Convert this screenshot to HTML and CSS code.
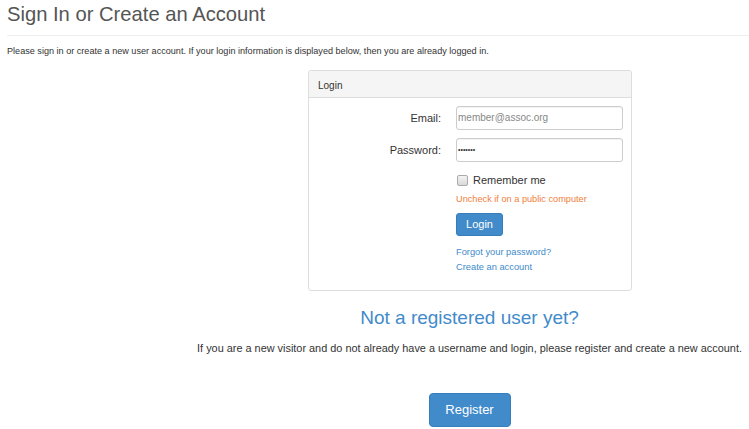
FILE: index.html
```html
<!DOCTYPE html>
<html>
<head>
<meta charset="utf-8">
<link rel="stylesheet" href="styles.css">
</head>
<body>
<h1 class="title">Sign In or Create an Account</h1>
<hr class="rule">
<p class="intro">Please sign in or create a new user account. If your login information is displayed below, then you are already logged in.</p>
<div class="panel">
  <div class="panel-head">Login</div>
  <div class="panel-body">
    <label class="lbl">Email:</label>
    <div class="field">member@assoc.org</div>
    <label class="lbl">Password:</label>
    <div class="field pw">•••••••</div>
    <div></div>
    <div class="remember"><span class="box"></span>Remember me</div>
    <div></div>
    <div class="warn">Uncheck if on a public computer</div>
    <div></div>
    <div><span class="btn btn-login">Login</span></div>
    <div></div>
    <div class="links"><a href="#">Forgot your password?</a><a href="#">Create an account</a></div>
  </div>
</div>
<div class="register">
  <h2 class="reg-title">Not a registered user yet?</h2>
  <p class="reg-text">If you are a new visitor and do not already have a username and login, please register and create a new account.</p>
  <span class="btn btn-reg">Register</span>
</div>
</body>
</html>
```
FILE: styles.css
```css
html, body { margin: 0; padding: 0; background: #fff; }
body {
  font-family: "Liberation Sans", Arial, sans-serif;
  color: #333;
  padding: 0 0 0 7px;
  width: 742px;
  overflow: hidden;
}
.title {
  margin: 0;
  padding-top: 2px;
  font-size: 20.2px;
  font-weight: normal;
  line-height: 24px;
  color: #555;
}
.rule {
  margin: 9px 0 0 0;
  border: 0;
  border-top: 1px solid #eee;
}
.intro {
  margin: 9px 0 0 0;
  font-size: 9.1px;
  line-height: 12px;
  color: #333;
}
.panel {
  margin: 13px 0 0 301px;
  width: 322px;
  border: 1px solid #ddd;
  border-radius: 3px;
}
.panel-head {
  height: 26px;
  line-height: 29px;
  padding: 0 9px;
  background: #f5f5f5;
  border-bottom: 1px solid #ddd;
  font-size: 10px;
  color: #333;
  border-radius: 3px 3px 0 0;
}
.panel-body {
  display: grid;
  grid-template-columns: 132px 167px;
  column-gap: 15px;
  padding: 8px 0 15px 0;
  align-items: center;
}
.lbl {
  text-align: right;
  font-size: 11px;
  color: #333;
  margin-bottom: 8px;
}
.field {
  height: 22px;
  border: 1px solid #ccc;
  border-radius: 3px;
  font-size: 10px;
  line-height: 22px;
  padding: 0 0 0 1px;
  color: #888;
  margin-bottom: 8px;
  box-shadow: inset 0 1px 1px rgba(0,0,0,0.05);
}
.field.pw {
  color: #333;
  font-size: 7px;
}
.remember {
  display: flex;
  align-items: center;
  font-size: 11px;
  color: #333;
  height: 18px;
  margin-top: 1px;
}
.box {
  width: 9px;
  height: 9px;
  border: 1px solid #aaa;
  border-radius: 2px;
  background: linear-gradient(#f4f4f4, #d8d8d8);
  margin: 0 5px 0 1px;
}
.warn {
  font-size: 9.2px;
  color: #f0803c;
  height: 20px;
  line-height: 20px;
}
.btn {
  display: inline-block;
  background: #428bca;
  border: 1px solid #357ebd;
  color: #fff;
  border-radius: 3px;
  text-align: center;
}
.btn-login {
  width: 45px;
  height: 21px;
  line-height: 21px;
  font-size: 11px;
  margin-top: 4px;
}
.links {
  display: flex;
  flex-direction: column;
  margin-top: 9px;
}
.links a {
  font-size: 9.3px;
  line-height: 15px;
  color: #428bca;
  text-decoration: none;
}
.register {
  margin-left: 183px;
  width: 559px;
  text-align: center;
}
.reg-title {
  margin: 15px 0 0 0;
  font-size: 19px;
  font-weight: normal;
  line-height: 24px;
  color: #428bca;
}
.reg-text {
  margin: 11px 0 0 0;
  font-size: 10.9px;
  line-height: 14px;
  color: #333;
}
.btn-reg {
  margin-top: 38px;
  width: 80px;
  height: 32px;
  line-height: 32px;
  font-size: 13px;
  border-radius: 4px;
}
```
